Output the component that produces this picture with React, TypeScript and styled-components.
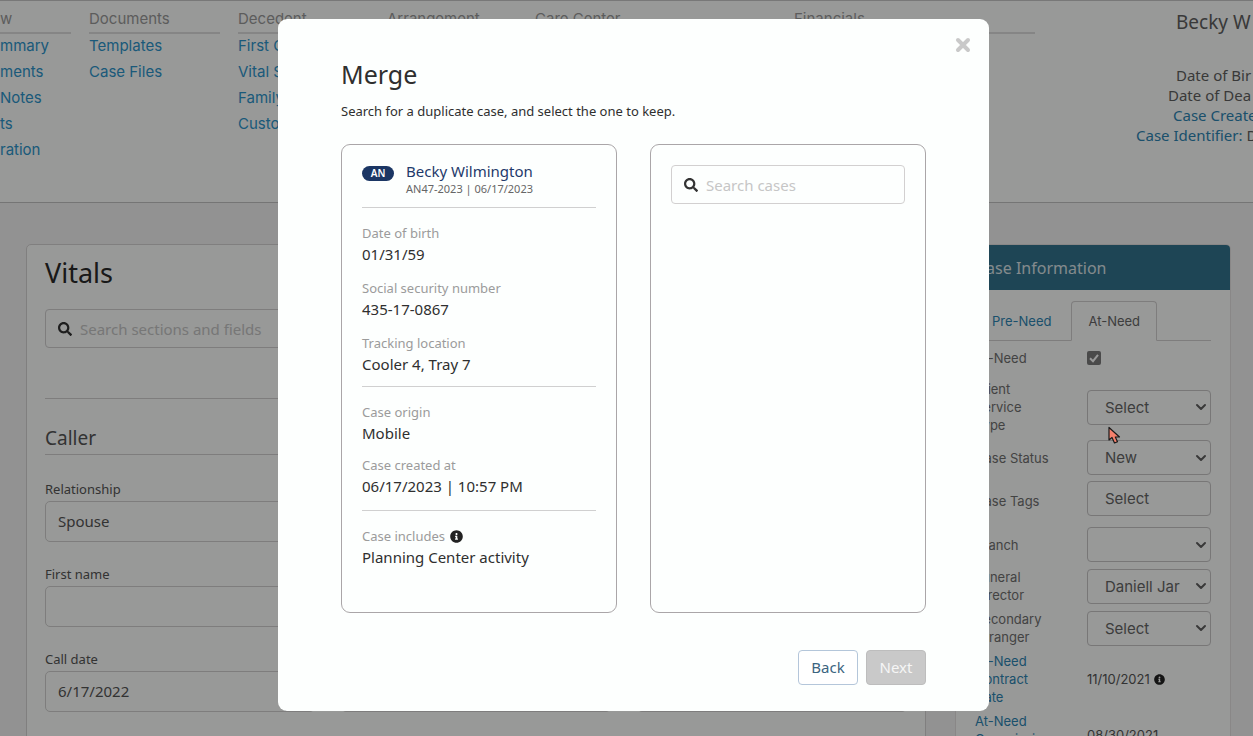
import React from 'react';
import styled, { createGlobalStyle } from 'styled-components';
import { FaSearch, FaInfoCircle } from 'react-icons/fa';

const GlobalStyle = createGlobalStyle`
  *, *::before, *::after { box-sizing: border-box; }
  body {
    margin: 0;
    background: #f4f3f3;
    color: #555;
    font-family: 'Noto Sans', 'Open Sans', sans-serif;
    font-size: 15px;
  }
  h1, h2, h3, p, ul, dl, dd { margin: 0; padding: 0; }
  ul { list-style: none; }
  a { color: inherit; text-decoration: none; }
  button, input, select { font: inherit; color: inherit; }
`;

const Page = styled.div`
  height: 100vh;
  overflow: hidden;
`;

const TopBar = styled.header`
  display: flex;
  height: 203px;
  background: #fdfffd;
  border-top: 1px solid #c8c8c8;
  border-bottom: 1px solid #c4c4c4;
`;

const Menu = styled.nav`
  display: flex;
  flex: none;
  gap: 18px;
  font-family: Inter, sans-serif;
`;

const MenuColumn = styled.div<{ $width: number }>`
  width: ${(p) => p.$width}px;
  padding-top: 8px;
`;

const MenuTitle = styled.h3`
  height: 25px;
  margin-bottom: -1px;
  border-bottom: 2px solid #dedede;
  color: #9a9a9a;
  font-size: 15px;
  line-height: 20px;
  font-weight: 400;
`;

const MenuLink = styled.a`
  display: block;
  color: #2d95cc;
  font-size: 15px;
  line-height: 26px;
  white-space: nowrap;
`;

const CaseSummary = styled.div`
  flex: 1;
  display: flex;
  justify-content: flex-end;
  min-width: 0;
`;

const SummaryText = styled.div`
  width: 117px;
  white-space: nowrap;
  display: flex;
  flex-direction: column;
  color: #606060;
  line-height: 20px;
`;

const SummaryName = styled.h2`
  padding-left: 40px;
  margin-bottom: 32px;
  font-size: 19px;
  line-height: 22px;
  padding-top: 10px;
  font-weight: 400;
`;

const SummaryLine = styled.p<{ $indent: number }>`
  padding-left: ${(p) => p.$indent}px;
  a { color: #2d85b4; }
`;

const Main = styled.main`
  display: flex;
  align-items: flex-start;
  gap: 29px;
  padding: 41px 22px 0 26px;
`;

const Card = styled.section`
  flex: 1;
  height: 560px;
  padding: 12px 18px;
  background: #fdfffd;
  border: 1px solid #d6d4d4;
  border-radius: 5px;
`;

const CardTitle = styled.h1`
  color: #2a2a2a;
  font-size: 27px;
  line-height: 32px;
  font-weight: 400;
  margin-bottom: 20px;
`;

const SearchBox = styled.label`
  display: flex;
  align-items: center;
  gap: 8px;
  height: 39px;
  padding: 0 12px;
  border: 1px solid #d2d0d0;
  border-radius: 4px;
  color: #333;
  svg { flex: none; }
`;

const SearchInput = styled.input`
  flex: 1;
  min-width: 0;
  padding: 0;
  border: 0;
  outline: 0;
  background: transparent;
  font-size: 15px;
  &::placeholder { color: #c6c6c6; opacity: 1; }
`;

const SectionTitle = styled.h2`
  margin-top: 50px;
  padding-top: 26px;
  height: 57px;
  border-top: 1px solid #d2d0d0;
  border-bottom: 1px solid #d2d0d0;
  font-size: 19px;
  line-height: 26px;
  font-weight: 400;
`;

const Fields = styled.div`
  display: grid;
  grid-template-columns: 1fr 1fr 1fr;
  column-gap: 26px;
  row-gap: 20px;
  padding-top: 22px;
`;

const Field = styled.label`
  display: flex;
  flex-direction: column;
  justify-content: flex-end;
  min-width: 0;
  font-size: 13px;
  line-height: 24px;
  &.new-row { grid-column-start: 1; }
`;

const FieldBox = styled.span`
  display: flex;
  height: 41px;
  border: 1px solid #d2d0d0;
  border-radius: 5px;
`;

const FieldInput = styled.input`
  flex: 1;
  min-width: 0;
  padding: 0 12px 2px;
  border: 0;
  background: transparent;
  font-size: 15px;
`;

const DateButton = styled.button`
  width: 29px;
  padding: 0;
  border: 0;
  border-left: 1px solid #d2d0d0;
  background: transparent;
`;

const Side = styled.aside`
  width: 276px;
  flex: none;
  height: 560px;
  background: #fdfffd;
  border: 1px solid #e4e1e1;
  border-radius: 5px;
  overflow: hidden;
  font-family: Inter, sans-serif;
`;

const SideTitle = styled.h2`
  height: 45px;
  padding-left: 20px;
  background: #32738e;
  color: #dce6ea;
  font-family: 'Noto Sans', sans-serif;
  font-size: 16px;
  line-height: 46px;
  font-weight: 400;
`;

const Tabs = styled.div`
  display: flex;
  gap: 3px;
  margin: 11px 19px 0;
  border-bottom: 1px solid #d2d0d0;
`;

const Tab = styled.button<{ $active?: boolean }>`
  height: 40px;
  margin-bottom: -1px;
  padding: 0 16px;
  border: 1px solid ${(p) => (p.$active ? '#d2d0d0' : 'transparent')};
  border-bottom-color: ${(p) => (p.$active ? '#fdfffd' : 'transparent')};
  border-radius: 4px 4px 0 0;
  background: transparent;
  color: ${(p) => (p.$active ? '#666' : '#2d85b4')};
  font-size: 13px;
`;

const Rows = styled.div`
  display: flex;
  flex-direction: column;
  gap: 6px;
  padding: 0 19px;
`;

const Row = styled.div<{ $min?: number; $top?: 'label' | 'control' }>`
  display: grid;
  grid-template-columns: 1fr 124px;
  align-items: center;
  min-height: ${(p) => p.$min ?? 35}px;
  > :first-child { align-self: ${(p) => (p.$top === 'label' ? 'start' : 'center')}; }
  > :last-child { align-self: ${(p) => (p.$top === 'control' ? 'start' : 'center')}; }
`;

const RowLabel = styled.label<{ $link?: boolean }>`
  width: 78px;
  color: ${(p) => (p.$link ? '#2d85b4' : '#707070')};
  font-size: 13px;
  line-height: 18px;
`;

const RowValue = styled.span`
  display: flex;
  align-items: center;
  gap: 4px;
  font-size: 13px;
  line-height: 18px;
  svg { color: #222; }
`;

const SelectBox = styled.span`
  display: grid;
  align-items: center;
  > * { grid-area: 1 / 1; }
  svg { justify-self: end; margin-right: 4px; pointer-events: none; }
`;

const Select = styled.select`
  width: 100%;
  height: 35px;
  padding: 0 30px 0 17px;
  appearance: none;
  border: 1px solid #c8c6c6;
  border-radius: 4px;
  background: transparent;
  font-size: 15px;
  color: #666;
`;

const TagInput = styled.input`
  width: 100%;
  height: 35px;
  padding: 0 17px;
  border: 1px solid #c8c6c6;
  border-radius: 4px;
  background: transparent;
  font-size: 15px;
  &::placeholder { color: #666; opacity: 1; }
`;

const CheckBoxWrap = styled.span`
  display: grid;
  justify-content: start;
  > * { grid-area: 1 / 1; }
  svg { pointer-events: none; }
`;

const CheckBox = styled.input`
  width: 14px;
  height: 14px;
  margin: 0;
  appearance: none;
  border-radius: 2px;
  background: #7c7c7c;
`;

const Backdrop = styled.div`
  position: fixed;
  inset: 0;
  display: flex;
  justify-content: center;
  align-items: flex-start;
  padding: 19px 0 0 14px;
  background: rgba(0, 0, 0, 0.4);
`;

const Dialog = styled.div`
  position: relative;
  width: 711px;
  max-width: 94vw;
  padding: 39px 63px 26px;
  border-radius: 9px;
  background: #fdfffe;
  color: #2f2f2f;
`;

const CloseButton = styled.button`
  position: absolute;
  top: 18px;
  right: 18px;
  display: flex;
  padding: 0;
  border: 0;
  background: transparent;
  color: #c9c9c9;
`;

const DialogTitle = styled.h2`
  font-size: 25px;
  line-height: 32px;
  font-weight: 400;
`;

const DialogText = styled.p`
  margin: 11px 0 23px;
  font-size: 13px;
  line-height: 20px;
`;

const Panels = styled.div`
  display: grid;
  grid-template-columns: repeat(2, minmax(0, 1fr));
  gap: 33px;
`;

const Panel = styled.section`
  height: 469px;
  padding: 20px;
  border: 1px solid #aaa6a8;
  border-radius: 9px;
`;

const CaseHead = styled.div`
  display: flex;
  align-items: flex-start;
  gap: 12px;
  height: 43px;
  padding-top: 1px;
  border-bottom: 1px solid #d0d0d0;
`;

const Badge = styled.span`
  width: 32px;
  border-radius: 8px;
  background: #1b3664;
  color: #fff;
  font-size: 10px;
  line-height: 15px;
  font-weight: 600;
  text-align: center;
`;

const CaseName = styled.h3`
  color: #1f3a6b;
  font-size: 15px;
  line-height: 10px;
  font-weight: 400;
`;

const CaseNumber = styled.p`
  margin-top: 5px;
  color: #666;
  font-size: 11px;
  line-height: 16px;
`;

const Details = styled.dl`
  display: flex;
  flex-direction: column;
  gap: 12px;
  padding: 15px 0 14px;
  &:first-of-type { gap: 14px; padding-bottom: 12px; }
  & + & { border-top: 1px solid #d0d0d0; }
`;

const DetailLabel = styled.dt`
  display: flex;
  align-items: center;
  gap: 5px;
  color: #9b9b9b;
  font-size: 13px;
  line-height: 21px;
  svg { color: #222; }
`;

const DetailValue = styled.dd`
  font-size: 15px;
  line-height: 20px;
`;

const Actions = styled.div`
  display: flex;
  justify-content: flex-end;
  gap: 8px;
  margin-top: 37px;
`;

const ActionButton = styled.button<{ $muted?: boolean }>`
  width: 60px;
  height: 35px;
  padding: 0 0 2px;
  border: 1px solid ${(p) => (p.$muted ? '#bdbdbd' : '#b4c6da')};
  border-radius: 4px;
  background: ${(p) => (p.$muted ? '#c9c9c9' : '#fff')};
  color: ${(p) => (p.$muted ? '#f6f6f6' : '#3b6480')};
  font-size: 15px;
`;

const Pointer = styled.svg`
  position: fixed;
  left: 1107px;
  top: 426px;
  pointer-events: none;
`;

const menus = [
  { title: 'w', width: 71, links: ['mmary', 'ments', 'Notes', 'ts', 'ration'] },
  { title: 'Documents', width: 131, links: ['Templates', 'Case Files'] },
  { title: 'Decedent', width: 131, links: ['First Call', 'Vital Statistics', 'Family', 'Custom'] },
  { title: 'Arrangement', width: 130, links: [] },
  { title: 'Care Center', width: 241, links: [] },
  { title: 'Financials', width: 241, links: [] },
];

const caseDetails = [
  [
    ['Date of birth', '01/31/59'],
    ['Social security number', '435-17-0867'],
    ['Tracking location', 'Cooler 4, Tray 7'],
  ],
  [
    ['Case origin', 'Mobile'],
    ['Case created at', '06/17/2023 | 10:57 PM'],
  ],
  [['Case includes', 'Planning Center activity']],
];

const Chevron = () => (
  <svg width="12" height="12" viewBox="0 0 12 12" fill="none" stroke="#606060" strokeWidth="2" strokeLinecap="round" strokeLinejoin="round">
    <path d="M2 4l4 4 4-4" />
  </svg>
);

function SelectRow({ id, label, value }: { id: string; label: string; value: string }) {
  return (
    <Row>
      <RowLabel htmlFor={id}>{label}</RowLabel>
      <SelectBox>
        <Select id={id} defaultValue={value}>
          <option value={value}>{value}</option>
        </Select>
        <Chevron />
      </SelectBox>
    </Row>
  );
}

function CaseInformation() {
  return (
    <Side>
      <SideTitle>Case Information</SideTitle>
      <Tabs role="tablist">
        <Tab role="tab">Pre-Need</Tab>
        <Tab role="tab" $active aria-selected>At-Need</Tab>
      </Tabs>
      <Rows>
        <Row $min={33}>
          <RowLabel htmlFor="at-need">At-Need</RowLabel>
          <CheckBoxWrap>
            <CheckBox id="at-need" type="checkbox" defaultChecked />
            <svg width="14" height="14" viewBox="0 0 14 14" fill="none" stroke="#fff" strokeWidth="2">
              <path d="M3 7.2l3 3 5-6.4" />
            </svg>
          </CheckBoxWrap>
        </Row>
        <SelectRow id="service" label="Client Service Type" value="Select" />
        <SelectRow id="status" label="Case Status" value="New" />
        <Row $min={40} $top="control">
          <RowLabel htmlFor="tags">Case Tags</RowLabel>
          <TagInput id="tags" placeholder="Select" />
        </Row>
        <SelectRow id="branch" label="Branch" value="" />
        <SelectRow id="director" label="Funeral Director" value="Daniell Jarvis" />
        <SelectRow id="arranger" label="Secondary Arranger" value="Select" />
        <Row>
          <RowLabel as="a" href="#contract" $link>At-Need Contract Date</RowLabel>
          <RowValue>11/10/2021 <FaInfoCircle size={11} /></RowValue>
        </Row>
        <Row $min={46} $top="label">
          <RowLabel as="a" href="#commission" $link>At-Need Commission</RowLabel>
          <RowValue>08/30/2021</RowValue>
        </Row>
      </Rows>
    </Side>
  );
}

function MergeDialog() {
  return (
    <Dialog role="dialog" aria-modal="true" aria-labelledby="merge-title">
      <CloseButton aria-label="Close">
        <svg width="16" height="16" viewBox="0 0 16 16" stroke="currentColor" strokeWidth="4" strokeLinecap="round">
          <path d="M3 3l10 10M13 3L3 13" />
        </svg>
      </CloseButton>
      <DialogTitle id="merge-title">Merge</DialogTitle>
      <DialogText>Search for a duplicate case, and select the one to keep.</DialogText>
      <Panels>
        <Panel>
          <CaseHead>
            <Badge>AN</Badge>
            <div>
              <CaseName>Becky Wilmington</CaseName>
              <CaseNumber>AN47-2023 | 06/17/2023</CaseNumber>
            </div>
          </CaseHead>
          {caseDetails.map((group) => (
            <Details key={group[0][0]}>
              {group.map(([label, value]) => (
                <div key={label}>
                  <DetailLabel>
                    {label}
                    {label === 'Case includes' && <FaInfoCircle size={13} />}
                  </DetailLabel>
                  <DetailValue>{value}</DetailValue>
                </div>
              ))}
            </Details>
          ))}
        </Panel>
        <Panel>
          <SearchBox>
            <FaSearch size={14} />
            <SearchInput aria-label="Search cases" placeholder="Search cases" />
          </SearchBox>
        </Panel>
      </Panels>
      <Actions>
        <ActionButton>Back</ActionButton>
        <ActionButton $muted disabled>Next</ActionButton>
      </Actions>
    </Dialog>
  );
}

export default function App() {
  return (
    <>
      <GlobalStyle />
      <Page>
        <TopBar>
          <Menu>
            {menus.map((menu) => (
              <MenuColumn key={menu.title} $width={menu.width}>
                <MenuTitle>{menu.title}</MenuTitle>
                {menu.links.map((link) => (
                  <MenuLink key={link} href="#menu">{link}</MenuLink>
                ))}
              </MenuColumn>
            ))}
          </Menu>
          <CaseSummary>
            <SummaryText>
              <SummaryName>Becky W</SummaryName>
              <SummaryLine $indent={40}>Date of Bir</SummaryLine>
              <SummaryLine $indent={32}>Date of Dea</SummaryLine>
              <SummaryLine $indent={37}><a href="#created">Case Create</a></SummaryLine>
              <SummaryLine $indent={0}><a href="#identifier">Case Identifier:</a> D</SummaryLine>
            </SummaryText>
          </CaseSummary>
        </TopBar>
        <Main>
          <Card>
            <CardTitle>Vitals</CardTitle>
            <SearchBox>
              <FaSearch size={14} />
              <SearchInput aria-label="Search sections and fields" placeholder="Search sections and fields" />
            </SearchBox>
            <SectionTitle>Caller</SectionTitle>
            <Fields>
              <Field className="new-row">
                Relationship
                <FieldBox><FieldInput defaultValue="Spouse" /></FieldBox>
              </Field>
              <Field className="new-row">
                First name
                <FieldBox><FieldInput /></FieldBox>
              </Field>
              <Field className="new-row">
                Call date
                <FieldBox>
                  <FieldInput defaultValue="6/17/2022" />
                  <DateButton aria-label="Pick a date" />
                </FieldBox>
              </Field>
              <Field><FieldBox><FieldInput aria-label="Call time" /></FieldBox></Field>
              <Field><FieldBox><FieldInput aria-label="Call taken by" /></FieldBox></Field>
            </Fields>
          </Card>
          <CaseInformation />
        </Main>
      </Page>
      <Backdrop>
        <MergeDialog />
      </Backdrop>
      <Pointer width="15" height="19" viewBox="0 0 15 19">
        <path d="M2 1.5V14l3-2.5L7.500 17l3-1.300L8.300 11H12.500Z" fill="#f4806c" stroke="#1a1a1a" strokeWidth="1.2" strokeLinejoin="round" />
      </Pointer>
    </>
  );
}
